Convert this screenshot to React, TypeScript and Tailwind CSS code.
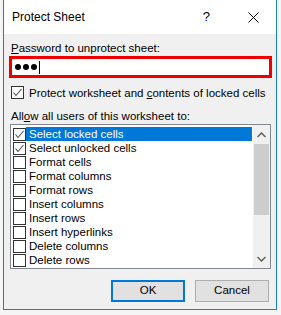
import React from "react";

const items = [
  { label: "Select locked cells", checked: true, selected: true },
  { label: "Select unlocked cells", checked: true },
  { label: "Format cells" },
  { label: "Format columns" },
  { label: "Format rows" },
  { label: "Insert columns" },
  { label: "Insert rows" },
  { label: "Insert hyperlinks" },
  { label: "Delete columns" },
  { label: "Delete rows" },
];

function CheckBox({ checked }: { checked?: boolean }) {
  return (
    <div className="w-[13px] h-[13px] border border-[#333333] bg-white flex items-center justify-center shrink-0">
      {checked && (
        <svg width="11" height="11" viewBox="0 0 11 11">
          <path d="M1.5 5.5 L4 8.5 L9.5 2" fill="none" stroke="#4d4d4d" strokeWidth="1.1" />
        </svg>
      )}
    </div>
  );
}

export default function App() {
  return (
    <div className="w-[281px] h-[315px] bg-[#f5f5f5] pl-[3px] font-['Liberation_Sans',Arial,sans-serif] text-[11.5px] text-black whitespace-nowrap">
      <div className="w-[274px] h-[310px] bg-[#f0f0f0] border-x border-b border-[#1a7fd4] flex flex-col">
        {/* title bar */}
        <div className="h-[34px] bg-white flex items-center pl-[8px] pr-[17px] shrink-0">
          <span className="text-[12px]">Protect Sheet</span>
          <span className="ml-auto mr-[38px] text-[13px]">?</span>
          <svg width="11" height="11" viewBox="0 0 11 11">
            <path d="M0.5 0.5 L10.5 10.5 M10.5 0.5 L0.5 10.5" stroke="#000" strokeWidth="1" />
          </svg>
        </div>

        <div className="flex flex-col pl-[5px] pr-[4px]">
          <div className="pl-[2px] mt-[7px] h-[14px] leading-[14px]">
            <span className="underline underline-offset-1">P</span>assword to unprotect sheet:
          </div>
          <div className="mt-[1px] h-[22px] border-[3px] border-[#ee0000] bg-white flex items-center pl-[3px] gap-[2px]">
            <span className="w-[6px] h-[6px] rounded-full bg-black"></span>
            <span className="w-[6px] h-[6px] rounded-full bg-black"></span>
            <span className="w-[6px] h-[6px] rounded-full bg-black"></span>
            <span className="w-px h-[13px] bg-black"></span>
          </div>

          <div className="mt-[8px] pl-[2px] h-[13px] flex items-center gap-[5px] leading-[14px]">
            <CheckBox checked />
            <span>
              Protect worksheet and <span className="underline underline-offset-1">c</span>ontents of locked cells
            </span>
          </div>

          <div className="pl-[2px] mt-[10px] h-[14px] leading-[14px]">
            All<span className="underline underline-offset-1">o</span>w all users of this worksheet to:
          </div>

          <div className="ml-[1px] mt-[1px] w-[261px] h-[145px] border border-[#828790] bg-white flex">
            <div className="flex flex-col pl-[2px] pt-[2px] w-[241px]">
              {items.map((it) => (
                <div key={it.label} className="h-[14px] flex items-center">
                  <CheckBox checked={it.checked} />
                  <div
                    className={`h-[14px] flex-1 flex items-center pl-[3px] leading-[14px] ${
                      it.selected ? "bg-[#0078d7] text-white" : ""
                    }`}
                  >
                    {it.label}
                  </div>
                </div>
              ))}
            </div>
            <div className="w-[17px] ml-auto flex flex-col bg-[#f0f0f0]">
              <div className="h-[19px] flex items-center justify-center">
                <svg width="9" height="6" viewBox="0 0 9 6">
                  <path d="M0.5 5 L4.5 1 L8.5 5" fill="none" stroke="#606060" strokeWidth="1.5" />
                </svg>
              </div>
              <div className="h-[71px] mx-px bg-[#cdcdcd]"></div>
              <div className="flex-1"></div>
              <div className="h-[19px] flex items-center justify-center">
                <svg width="9" height="6" viewBox="0 0 9 6">
                  <path d="M0.5 1 L4.5 5 L8.5 1" fill="none" stroke="#606060" strokeWidth="1.5" />
                </svg>
              </div>
            </div>
          </div>

          <div className="mt-[11px] flex justify-end gap-[10px] pr-[3px]">
            <button className="w-[74px] h-[22px] bg-[#e1e1e1] border-2 border-[#0078d7] flex items-center justify-center">
              OK
            </button>
            <button className="w-[74px] h-[22px] bg-[#e1e1e1] border border-[#adadad] flex items-center justify-center">
              Cancel
            </button>
          </div>
        </div>
      </div>
    </div>
  );
}
